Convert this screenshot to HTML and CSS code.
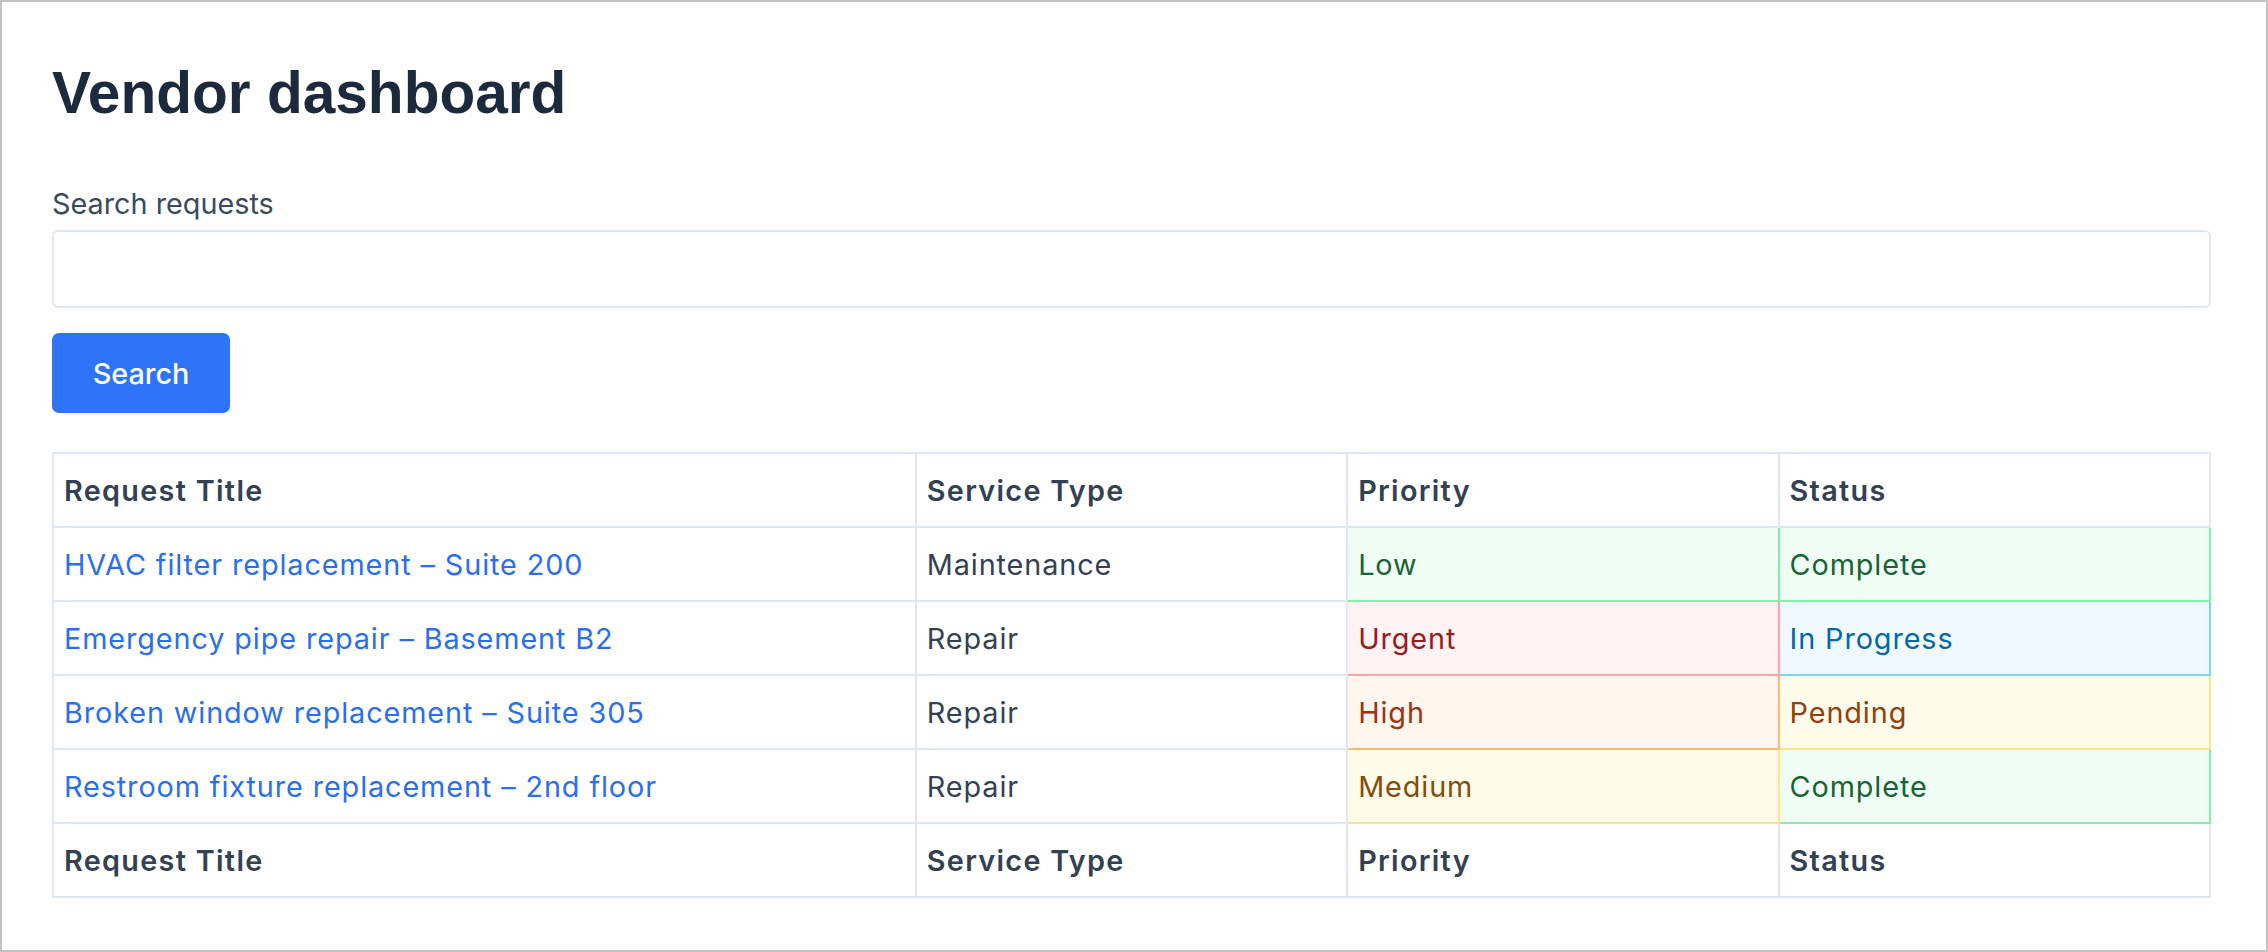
FILE: index.html
```html
<!DOCTYPE html>
<html lang="en">
<head>
<meta charset="utf-8">
<title>Vendor dashboard</title>
<link rel="stylesheet" href="styles.css">
</head>
<body>
<div class="page">
  <h1 class="title">Vendor dashboard</h1>
  <form class="search" onsubmit="return false;">
    <label class="search-label" for="q">Search requests</label>
    <input class="search-input" id="q" type="text">
    <button class="search-btn" type="submit">Search</button>
  </form>
  <table class="requests">
    <colgroup>
      <col class="c-title"><col class="c-small"><col class="c-small"><col class="c-small">
    </colgroup>
    <thead>
      <tr><th>Request Title</th><th>Service Type</th><th>Priority</th><th>Status</th></tr>
    </thead>
    <tbody>
      <tr>
        <td><a class="req-link" href="#">HVAC filter replacement – Suite 200</a></td>
        <td>Maintenance</td>
        <td class="tone-green">Low</td>
        <td class="tone-green">Complete</td>
      </tr>
      <tr>
        <td><a class="req-link" href="#">Emergency pipe repair – Basement B2</a></td>
        <td>Repair</td>
        <td class="tone-red">Urgent</td>
        <td class="tone-blue">In Progress</td>
      </tr>
      <tr>
        <td><a class="req-link" href="#">Broken window replacement – Suite 305</a></td>
        <td>Repair</td>
        <td class="tone-orange">High</td>
        <td class="tone-amber">Pending</td>
      </tr>
      <tr>
        <td><a class="req-link" href="#">Restroom fixture replacement – 2nd floor</a></td>
        <td>Repair</td>
        <td class="tone-yellow">Medium</td>
        <td class="tone-green">Complete</td>
      </tr>
    </tbody>
    <tfoot>
      <tr><th>Request Title</th><th>Service Type</th><th>Priority</th><th>Status</th></tr>
    </tfoot>
  </table>
</div>
</body>
</html>
```
FILE: styles.css
```css
html, body {
  margin: 0;
  padding: 0;
  background: #ffffff;
}

body {
  font-family: Inter, "Noto Sans", sans-serif;
  font-size: 28.8px;
  line-height: 43.2px;
  color: #334155;
}

.page {
  box-sizing: border-box;
  height: 952px;
  border: 2px solid #c2c2c2;
  padding: 56px 55px 0 50px;
}

.title {
  margin: 0;
  font-family: "Liberation Sans", Arial, sans-serif;
  font-weight: 700;
  font-size: 58.6px;
  line-height: 69px;
  color: #1b2a3c;
}

.search {
  margin: 55px 0 0;
}

.search-label {
  display: block;
  color: #3b4b5f;
  margin-bottom: 5px;
}

.search-input {
  display: block;
  box-sizing: border-box;
  width: 100%;
  height: 78px;
  margin: 0;
  border: 2px solid #e2e8f0;
  border-radius: 6px;
  padding: 0 16px;
  font: inherit;
  background: #fff;
  outline: none;
}

.search-btn {
  display: block;
  box-sizing: border-box;
  margin-top: 25px;
  width: 178px;
  height: 80px;
  border: 0;
  border-radius: 7px;
  background: #2e74f9;
  color: #ffffff;
  font-family: Inter, sans-serif;
  font-weight: 500;
  font-size: 28.8px;
  line-height: 43.2px;
  padding: 0;
}

.requests {
  margin-top: 39px;
  width: 100%;
  border-collapse: collapse;
  table-layout: fixed;
}

.c-title { width: 40%; }
.c-small { width: 20%; }

.requests th,
.requests td {
  border: 2px solid #e2e8f0;
  padding: 14.4px 10px;
  text-align: left;
  vertical-align: middle;
  white-space: nowrap;
}

.requests th {
  font-weight: 600;
  color: #334155;
  letter-spacing: 1.3px;
}

.requests td {
  font-weight: 400;
  color: #334155;
  letter-spacing: 0.9px;
}

.req-link {
  color: #2a6ef2;
  text-decoration: none;
}

.requests td.tone-green {
  background: #f0fdf4;
  color: #166534;
  border-color: #86efac;
}

.requests td.tone-red {
  background: #fef2f2;
  color: #991b1b;
  border-color: #fca5a5;
}

.requests td.tone-orange {
  background: #fff7ed;
  color: #9a3412;
  border-color: #fdba74;
}

.requests td.tone-yellow {
  background: #fefce8;
  color: #854d0e;
  border-color: #fde68a;
}

.requests td.tone-amber {
  background: #fffbeb;
  color: #92400e;
  border-color: #fde68a;
}

.requests td.tone-blue {
  background: #f0f9ff;
  color: #0369a1;
  border-color: #7dd3fc;
}
```
